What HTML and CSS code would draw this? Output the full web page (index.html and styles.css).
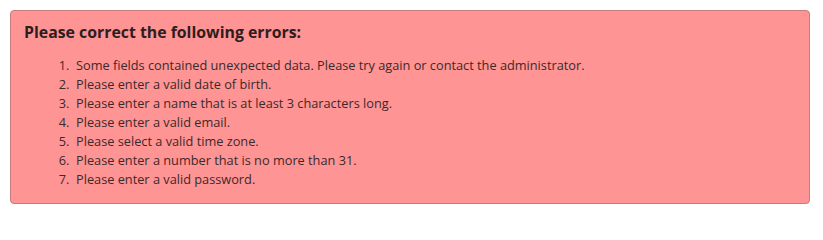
FILE: index.html
```html
<!DOCTYPE html>
<html>
<head>
<meta charset="utf-8">
<link rel="stylesheet" href="styles.css">
</head>
<body>
<div class="errors">
  <h2 class="errors-title">Please correct the following errors:</h2>
  <ol class="errors-list">
    <li>Some fields contained unexpected data. Please try again or contact the administrator.</li>
    <li>Please enter a valid date of birth.</li>
    <li>Please enter a name that is at least 3 characters long.</li>
    <li>Please enter a valid email.</li>
    <li>Please select a valid time zone.</li>
    <li>Please enter a number that is no more than 31.</li>
    <li>Please enter a valid password.</li>
  </ol>
</div>
</body>
</html>
```

FILE: styles.css
```css
html, body {
  margin: 0;
  padding: 0;
  background: #ffffff;
}
body {
  padding: 10px;
  font-family: "Open Sans", "DejaVu Sans", sans-serif;
  color: #3b2a2a;
}
.errors {
  box-sizing: border-box;
  width: 800px;
  background: #ff9494;
  border: 1px solid #c97a7a;
  border-radius: 4px;
  padding: 10px 13px 14px;
}
.errors-title {
  margin: 0 0 13px;
  font-size: 15.85px;
  line-height: 22px;
  font-weight: 700;
  color: #2e1d1d;
}
.errors-list {
  margin: 0;
  padding-left: 52px;
  font-size: 12.75px;
  line-height: 19px;
  color: #3b2a2a;
}
.errors-list li::marker {
  content: counter(list-item) ".\00a0\00a0";
}
```
